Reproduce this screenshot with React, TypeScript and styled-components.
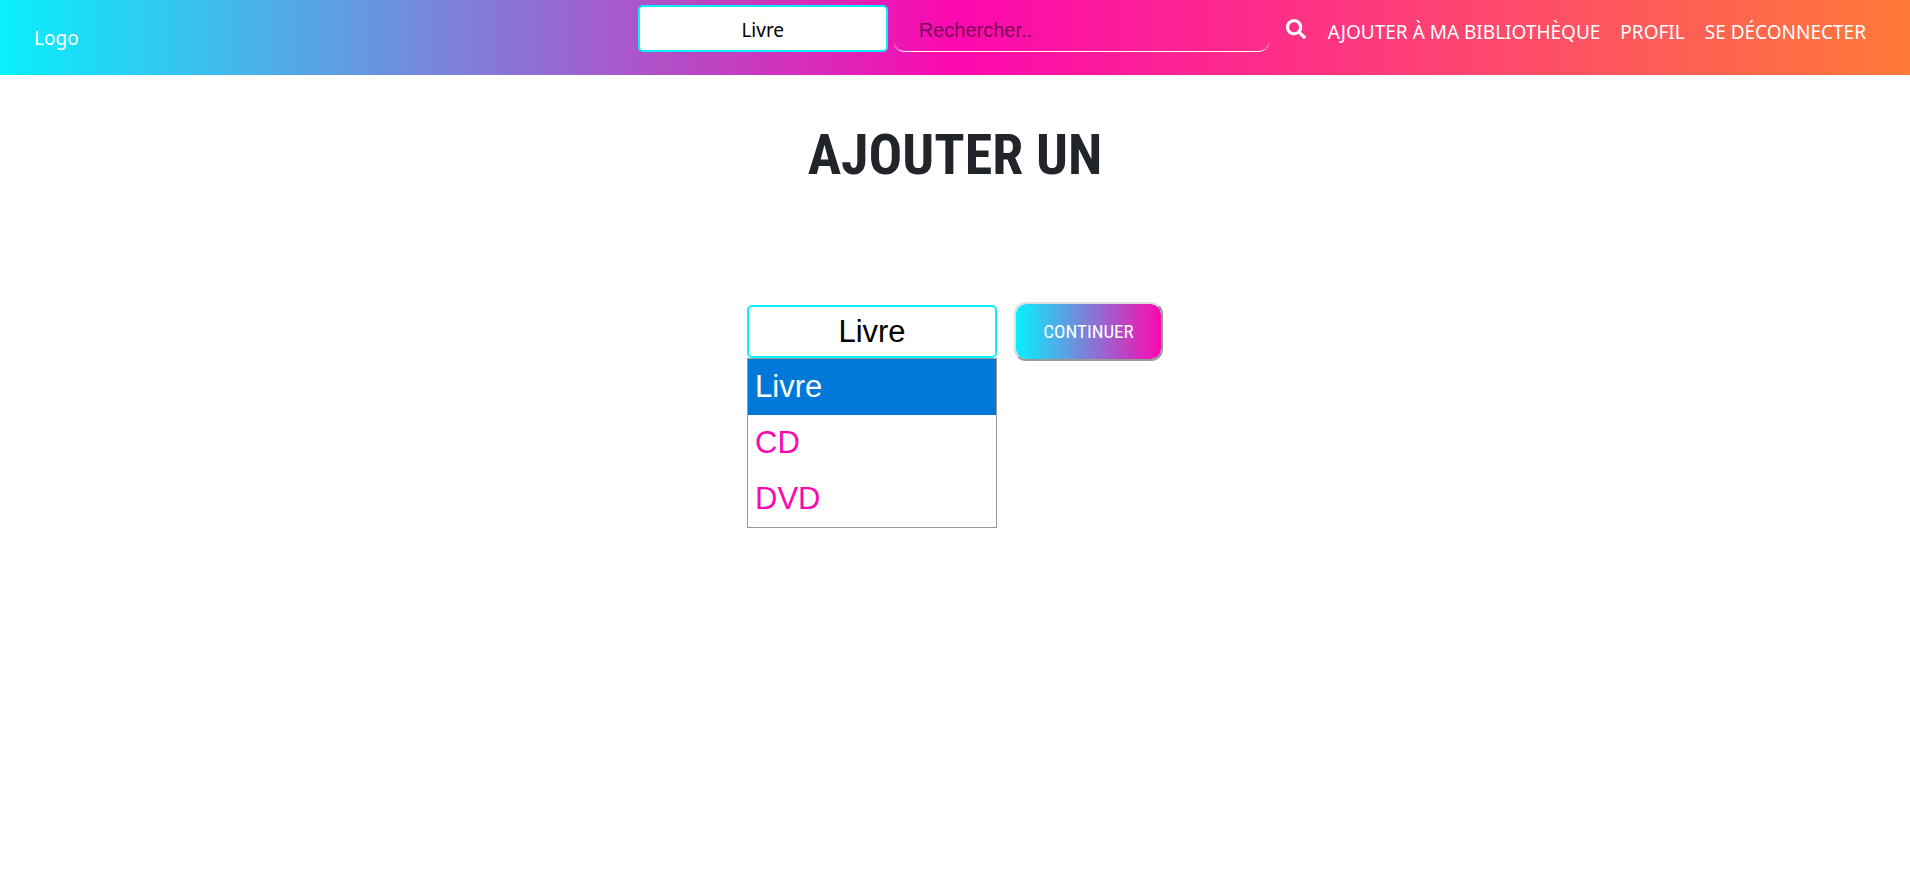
import React, { useState } from 'react';
import styled, { createGlobalStyle } from 'styled-components';

const CYAN = '#08f0fc';
const PINK = '#fc08b0';
const ORANGE = '#ff7a38';
const UI_FONT = '"Segoe UI", "Noto Sans", "Open Sans", sans-serif';
const CONTROL_FONT = '"Liberation Sans", Arial, sans-serif';
const DISPLAY_FONT = '"Roboto Condensed", "Open Sans Condensed", Lato, sans-serif';

const GlobalStyle = createGlobalStyle`
  *, *::before, *::after { box-sizing: border-box; }
  body {
    margin: 0;
    background: #fff;
    color: #212529;
    font-family: ${UI_FONT};
  }
`;

const Page = styled.div`
  display: flex;
  flex-direction: column;
  min-height: 100vh;
`;

const Header = styled.header`
  display: flex;
  align-items: flex-start;
  justify-content: space-between;
  min-height: 75px;
  padding: 5px 44px 0 34px;
  background: linear-gradient(to right, ${CYAN}, ${PINK} 50%, ${ORANGE});
`;

const Logo = styled.a`
  padding-top: 18px;
  color: #fff;
  font-size: 19px;
  line-height: 30px;
  text-decoration: none;
`;

const HeaderTools = styled.div`
  display: flex;
  align-items: flex-start;
  gap: 22px;
`;

const SearchForm = styled.form`
  display: flex;
  align-items: flex-start;
  gap: 6px;
`;

const Select = styled.select<{ $large?: boolean }>`
  appearance: none;
  display: block;
  width: 250px;
  height: ${p => (p.$large ? 53 : 47)}px;
  padding: ${p => (p.$large ? 0 : 2)}px 0 0;
  border: 2px solid ${CYAN};
  border-radius: 5px;
  outline: none;
  background: #fff;
  color: #000;
  font-family: ${p => (p.$large ? CONTROL_FONT : UI_FONT)};
  font-size: ${p => (p.$large ? 31 : 19)}px;
  text-align: center;
  text-align-last: center;
`;

const SearchInput = styled.input`
  width: 375px;
  height: 47px;
  padding: 4px 25px 0;
  border: 0;
  border-bottom: 1px solid #fff;
  border-radius: 10px;
  outline: none;
  background: transparent;
  color: #fff;
  font-family: ${CONTROL_FONT};
  font-size: 20px;

  &::placeholder {
    color: rgba(0, 0, 0, 0.54);
    opacity: 1;
  }
`;

const IconButton = styled.button`
  display: flex;
  margin-left: 11px;
  padding: 14px 0;
  border: 0;
  background: none;
  color: #fff;
  cursor: pointer;
`;

const Links = styled.nav`
  display: flex;
  gap: 20px;
  padding-top: 12px;
`;

const NavLink = styled.a`
  color: #fff;
  font-size: 19px;
  line-height: 30px;
  text-decoration: none;
  text-transform: uppercase;
  white-space: nowrap;
`;

const Main = styled.main`
  display: flex;
  flex: 1;
  flex-direction: column;
  align-items: center;
  gap: 107px;
  padding: 40px 16px;
`;

const Title = styled.h1`
  margin: 0;
  font-family: ${DISPLAY_FONT};
  font-size: 56px;
  font-weight: 700;
  line-height: 80px;
  text-transform: uppercase;
`;

const TypeForm = styled.form`
  display: flex;
  align-items: center;
  gap: 17px;
`;

const SelectField = styled.div`
  position: relative;
`;

const OptionList = styled.ul`
  position: absolute;
  top: 100%;
  left: 0;
  width: 100%;
  margin: 0;
  padding: 0;
  border: 1px solid #999;
  background: #fff;
  list-style: none;
`;

const Option = styled.li<{ $selected: boolean }>`
  padding: 0 7px;
  background: ${p => (p.$selected ? '#0078d7' : '#fff')};
  color: ${p => (p.$selected ? '#fff' : PINK)};
  font-family: ${CONTROL_FONT};
  font-size: 31px;
  line-height: 56px;
  cursor: default;
`;

const ContinueButton = styled.button`
  width: 149px;
  height: 59px;
  padding: 0;
  border: 2px solid;
  border-color: #e0e0e0 #999 #999 #e0e0e0;
  border-radius: 12px;
  background: linear-gradient(to right, ${CYAN}, ${PINK}) padding-box;
  color: #fff;
  font-family: ${DISPLAY_FONT};
  font-size: 19px;
  text-transform: uppercase;
  cursor: pointer;
`;

const SearchIcon = () => (
  <svg width="20" height="20" viewBox="0 0 512 512" fill="currentColor" aria-hidden="true">
    <path d="M505 442.7L405.3 343c-4.5-4.500-10.600-7-17-7H372c27.600-35.300 44-79.700 44-128C416 93.100 322.900 0 208 0S0 93.100 0 208s93.100 208 208 208c48.300 0 92.700-16.400 128-44v16.300c0 6.400 2.500 12.500 7 17l99.700 99.700c9.400 9.400 24.600 9.400 33.900 0l28.300-28.300c9.400-9.400 9.400-24.600.1-34zM208 336c-70.700 0-128-57.200-128-128 0-70.700 57.200-128 128-128 70.700 0 128 57.200 128 128 0 70.700-57.200 128-128 128z" />
  </svg>
);

const TYPES = ['Livre', 'CD', 'DVD'];
const typeOptions = TYPES.map(type => <option key={type}>{type}</option>);

export default function App() {
  const [type, setType] = useState('Livre');
  const [open, setOpen] = useState(true);

  return (
    <Page>
      <GlobalStyle />
      <Header>
        <Logo href="#">Logo</Logo>
        <HeaderTools>
          <SearchForm role="search" onSubmit={e => e.preventDefault()}>
            <Select aria-label="Type de recherche">{typeOptions}</Select>
            <SearchInput type="text" aria-label="Rechercher" placeholder="Rechercher.." />
            <IconButton type="submit" aria-label="Lancer la recherche">
              <SearchIcon />
            </IconButton>
          </SearchForm>
          <Links>
            <NavLink href="#">Ajouter à ma bibliothèque</NavLink>
            <NavLink href="#">Profil</NavLink>
            <NavLink href="#">Se déconnecter</NavLink>
          </Links>
        </HeaderTools>
      </Header>
      <Main>
        <Title>Ajouter un</Title>
        <TypeForm onSubmit={e => e.preventDefault()}>
          <SelectField>
            <Select
              $large
              aria-label="Type de média"
              value={type}
              onChange={e => setType(e.target.value)}
              onMouseDown={e => {
                e.preventDefault();
                setOpen(!open);
              }}
            >
              {typeOptions}
            </Select>
            {open && (
              <OptionList role="listbox" aria-label="Type de média">
                {TYPES.map(item => (
                  <Option
                    key={item}
                    role="option"
                    aria-selected={item === type}
                    $selected={item === type}
                    onClick={() => {
                      setType(item);
                      setOpen(false);
                    }}
                  >
                    {item}
                  </Option>
                ))}
              </OptionList>
            )}
          </SelectField>
          <ContinueButton type="submit">Continuer</ContinueButton>
        </TypeForm>
      </Main>
    </Page>
  );
}
